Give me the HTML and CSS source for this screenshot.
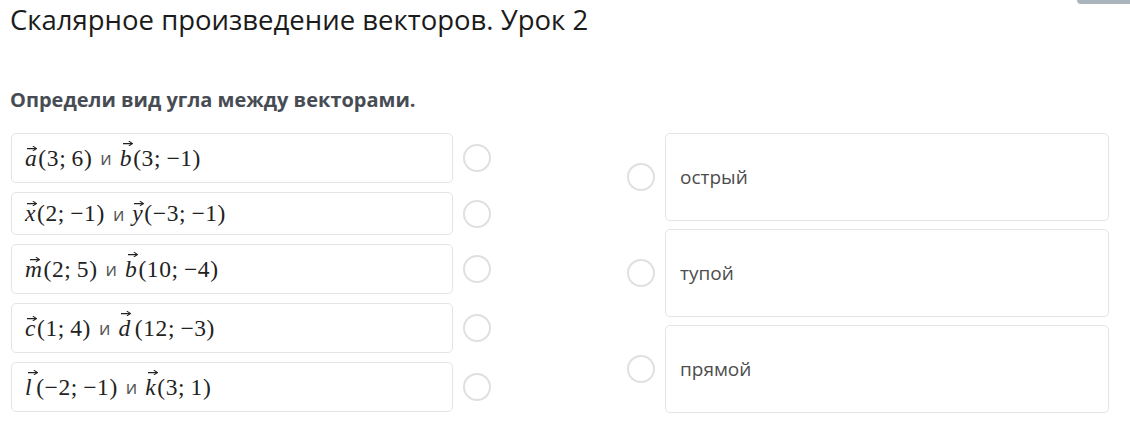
FILE: index.html
```html
<!DOCTYPE html>
<html lang="ru">
<head>
<meta charset="utf-8">
<title>Скалярное произведение векторов. Урок 2</title>
<link rel="stylesheet" href="styles.css">
</head>
<body>
<div class="page">
  <header class="head">
    <h1 class="title">Скалярное произведение векторов. Урок 2</h1>
    <div class="tab"></div>
  </header>
  <p class="question">Определи вид угла между векторами.</p>
  <div class="match">
    <div class="col left">
      <div class="row">
        <div class="box tall"><span class="m"><span class="v">a<svg class="arr" viewBox="0 0 10 5"><path d="M0 2.6H8.6M6.2 0.4L9.6 2.6L6.2 4.6"/></svg></span>(3;&#8201;6)</span><span class="conj">и</span><span class="m"><span class="v up">b<svg class="arr" viewBox="0 0 10 5"><path d="M0 2.6H8.6M6.2 0.4L9.6 2.6L6.2 4.6"/></svg></span>(3;&#8201;−1)</span></div>
        <span class="radio"></span>
      </div>
      <div class="row">
        <div class="box short"><span class="m"><span class="v">x<svg class="arr" viewBox="0 0 10 5"><path d="M0 2.6H8.6M6.2 0.4L9.6 2.6L6.2 4.6"/></svg></span>(2;&#8201;−1)</span><span class="conj">и</span><span class="m"><span class="v">y<svg class="arr" viewBox="0 0 10 5"><path d="M0 2.6H8.6M6.2 0.4L9.6 2.6L6.2 4.6"/></svg></span>(−3;&#8201;−1)</span></div>
        <span class="radio"></span>
      </div>
      <div class="row">
        <div class="box tall"><span class="m"><span class="v wide">m<svg class="arr" viewBox="0 0 10 5"><path d="M0 2.6H8.6M6.2 0.4L9.6 2.6L6.2 4.6"/></svg></span>(2;&#8201;5)</span><span class="conj">и</span><span class="m"><span class="v up">b<svg class="arr" viewBox="0 0 10 5"><path d="M0 2.6H8.6M6.2 0.4L9.6 2.6L6.2 4.6"/></svg></span>(10;&#8201;−4)</span></div>
        <span class="radio"></span>
      </div>
      <div class="row">
        <div class="box tall"><span class="m"><span class="v">c<svg class="arr" viewBox="0 0 10 5"><path d="M0 2.6H8.6M6.2 0.4L9.6 2.6L6.2 4.6"/></svg></span>(1;&#8201;4)</span><span class="conj">и</span><span class="m"><span class="v up pad">d<svg class="arr" viewBox="0 0 10 5"><path d="M0 2.6H8.6M6.2 0.4L9.6 2.6L6.2 4.6"/></svg></span>(12;&#8201;−3)</span></div>
        <span class="radio"></span>
      </div>
      <div class="row">
        <div class="box tall"><span class="m"><span class="v up pad">l<svg class="arr" viewBox="0 0 10 5"><path d="M0 2.6H8.6M6.2 0.4L9.6 2.6L6.2 4.6"/></svg></span>(−2;&#8201;−1)</span><span class="conj">и</span><span class="m"><span class="v up">k<svg class="arr" viewBox="0 0 10 5"><path d="M0 2.6H8.6M6.2 0.4L9.6 2.6L6.2 4.6"/></svg></span>(3;&#8201;1)</span></div>
        <span class="radio"></span>
      </div>
    </div>
    <div class="col right">
      <div class="row">
        <span class="radio"></span>
        <div class="box ans">острый</div>
      </div>
      <div class="row">
        <span class="radio"></span>
        <div class="box ans">тупой</div>
      </div>
      <div class="row">
        <span class="radio"></span>
        <div class="box ans">прямой</div>
      </div>
    </div>
  </div>
</div>
</body>
</html>
```

FILE: styles.css
```css
html, body {
  margin: 0;
  padding: 0;
  background: #ffffff;
}

body {
  font-family: "Open Sans", "Noto Sans", sans-serif;
  color: #333;
}

.page {
  padding: 0 21px 0 11px;
}

.head {
  display: flex;
  align-items: flex-start;
  margin-right: -21px;
}

.title {
  flex: 1;
  margin: 0 0 0 -1px;
  font-size: 27.5px;
  line-height: 40px;
  font-weight: 400;
  color: #1b1b1b;
}

.tab {
  width: 53px;
  height: 4px;
  background: #a9b4bc;
  border-bottom-left-radius: 6px;
}

.question {
  margin: 48px 0 0 -1px;
  font-size: 20px;
  line-height: 24px;
  font-weight: 700;
  color: #474c54;
}

.match {
  margin-top: 21px;
  display: flex;
  justify-content: space-between;
  align-items: flex-start;
}

.col {
  display: flex;
  flex-direction: column;
  gap: 9px;
}

.left {
  width: 480px;
}

.right {
  width: 482px;
  gap: 8px;
}

.row {
  display: flex;
  align-items: center;
  gap: 10px;
}

.box {
  flex: 1;
  border: 1px solid #e4e4e4;
  border-radius: 5px;
  background: #fff;
  box-sizing: border-box;
}

.left .box {
  padding: 0 13px;
  display: flex;
  align-items: center;
  height: 50px;
}

.left .box.short {
  height: 43px;
}

.radio {
  flex: none;
  width: 28px;
  height: 28px;
  box-sizing: border-box;
  border: 2px solid #e0e0e0;
  border-radius: 50%;
  background: #fff;
}

.ans {
  height: 88px;
  padding: 0 14px;
  display: flex;
  align-items: center;
  font-size: 19px;
  color: #4d4d4d;
}

.m {
  font-family: "Liberation Serif", "DejaVu Serif", serif;
  font-size: 23.5px;
  letter-spacing: 0.6px;
  color: #222;
  white-space: nowrap;
}

.v {
  position: relative;
  display: inline-block;
  font-style: italic;
  line-height: 23px;
  padding-right: 1px;
}

.v.pad {
  padding-right: 4px;
}

.arr {
  position: absolute;
  left: 2px;
  top: -1px;
  width: 10px;
  height: 5px;
  fill: none;
  stroke: #222;
  stroke-width: 1.1;
  stroke-linecap: round;
  stroke-linejoin: round;
}

.v.up .arr {
  top: -6px;
  left: 3px;
}

.v.wide .arr {
  left: 5px;
}

.conj {
  font-family: "Open Sans", "Noto Sans", sans-serif;
  font-size: 18px;
  color: #555;
  margin: 0 8px;
}
```
